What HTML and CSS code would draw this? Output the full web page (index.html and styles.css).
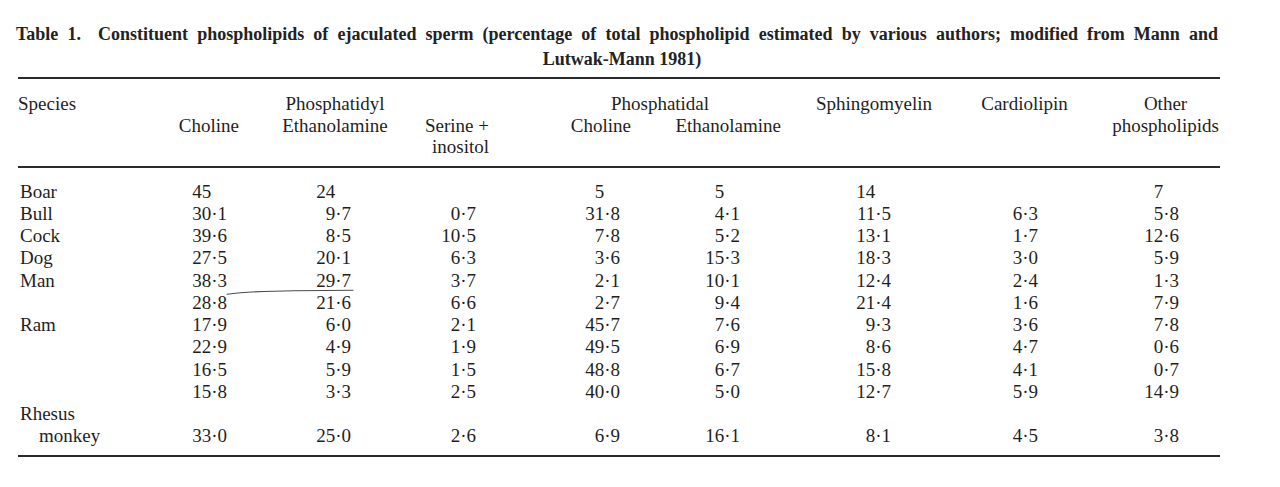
FILE: index.html
```html
<!DOCTYPE html>
<html lang="en">
<head>
<meta charset="utf-8">
<title>Table 1. Constituent phospholipids of ejaculated sperm</title>
<link rel="stylesheet" href="styles.css">
</head>
<body>
<div class="page">
  <div class="caption">
    <p class="cap-line1"><span class="label">Table 1.</span> Constituent phospholipids of ejaculated sperm (percentage of total phospholipid estimated by various authors; modified from Mann and</p>
    <p class="cap-line2">Lutwak-Mann 1981)</p>
  </div>
  <table class="tbl">
    <colgroup>
      <col class="w0"><col class="w1"><col class="w2"><col class="w3"><col class="w4"><col class="w5"><col class="w6"><col class="w7"><col class="w8">
    </colgroup>
    <thead>
      <tr class="h1">
        <th class="h-sp">Species</th>
        <th></th>
        <th class="h-pe">Phosphatidyl</th>
        <th></th>
        <th class="h-pal" colspan="2">Phosphatidal</th>
        <th class="h-sm">Sphingomyelin</th>
        <th class="h-cl">Cardiolipin</th>
        <th class="h-ot">Other</th>
      </tr>
      <tr class="h2">
        <th></th>
        <th class="h-c1">Choline</th>
        <th class="h-pe">Ethanolamine</th>
        <th class="h-si">Serine +<br>inositol</th>
        <th class="h-c4">Choline</th>
        <th class="h-e5">Ethanolamine</th>
        <th></th>
        <th></th>
        <th class="h-ot">phospholipids</th>
      </tr>
    </thead>
    <tbody>
      <tr class="first"><td>Boar</td><td>45<span class="pad">·0</span></td><td>24<span class="pad">·0</span></td><td></td><td>5<span class="pad">·0</span></td><td>5<span class="pad">·0</span></td><td>14<span class="pad">·0</span></td><td></td><td>7<span class="pad">·0</span></td></tr>
      <tr><td>Bull</td><td>30·1</td><td>9·7</td><td>0·7</td><td>31·8</td><td>4·1</td><td>11·5</td><td>6·3</td><td>5·8</td></tr>
      <tr><td>Cock</td><td>39·6</td><td>8·5</td><td>10·5</td><td>7·8</td><td>5·2</td><td>13·1</td><td>1·7</td><td>12·6</td></tr>
      <tr><td>Dog</td><td>27·5</td><td>20·1</td><td>6·3</td><td>3·6</td><td>15·3</td><td>18·3</td><td>3·0</td><td>5·9</td></tr>
      <tr><td>Man</td><td>38·3</td><td>29·7</td><td>3·7</td><td>2·1</td><td>10·1</td><td>12·4</td><td>2·4</td><td>1·3</td></tr>
      <tr><td></td><td>28·8</td><td>21·6</td><td>6·6</td><td>2·7</td><td>9·4</td><td>21·4</td><td>1·6</td><td>7·9</td></tr>
      <tr><td>Ram</td><td>17·9</td><td>6·0</td><td>2·1</td><td>45·7</td><td>7·6</td><td>9·3</td><td>3·6</td><td>7·8</td></tr>
      <tr><td></td><td>22·9</td><td>4·9</td><td>1·9</td><td>49·5</td><td>6·9</td><td>8·6</td><td>4·7</td><td>0·6</td></tr>
      <tr><td></td><td>16·5</td><td>5·9</td><td>1·5</td><td>48·8</td><td>6·7</td><td>15·8</td><td>4·1</td><td>0·7</td></tr>
      <tr><td></td><td>15·8</td><td>3·3</td><td>2·5</td><td>40·0</td><td>5·0</td><td>12·7</td><td>5·9</td><td>14·9</td></tr>
      <tr><td>Rhesus</td><td></td><td></td><td></td><td></td><td></td><td></td><td></td><td></td></tr>
      <tr class="last"><td class="indent">monkey</td><td>33·0</td><td>25·0</td><td>2·6</td><td>6·9</td><td>16·1</td><td>8·1</td><td>4·5</td><td>3·8</td></tr>
    </tbody>
  </table>
  <svg class="pencil" width="132" height="10" viewBox="0 0 132 10" aria-hidden="true">
    <path d="M2 7.2 C 18 5.2, 40 4, 70 3.8 S 115 3.4, 128 3.2" fill="none" stroke="#4a4a4a" stroke-width="1.1" stroke-linecap="round"/>
  </svg>
</div>
</body>
</html>
```

FILE: styles.css
```css
html, body {
  margin: 0;
  padding: 0;
  background: #ffffff;
}

body {
  font-family: "Liberation Serif", "Times New Roman", serif;
  color: #1f1f1f;
}

.page {
  position: relative;
  width: 1280px;
  height: 487px;
  box-sizing: border-box;
  padding: 22px 0 0 16px;
  overflow: hidden;
}

.caption {
  width: 1202px;
  margin: 0 0 5px 0;
  font-weight: bold;
  font-size: 18px;
  line-height: 25px;
  color: #222;
}

.caption p {
  margin: 0;
}

.cap-line1 {
  text-align: justify;
  text-align-last: justify;
}

.cap-line1 .label {
  margin-right: 8px;
}

.cap-line2 {
  text-align: center;
  padding-left: 10px;
}

.tbl {
  margin-left: 2px;
  width: 1202px;
  table-layout: fixed;
  border-collapse: separate;
  border-spacing: 0;
  font-size: 19px;
  color: #1f1f1f;
}

.w0 { width: 142px; }
.w1 { width: 100px; }
.w2 { width: 140px; }
.w3 { width: 130px; }
.w4 { width: 120px; }
.w5 { width: 150px; }
.w6 { width: 160px; }
.w7 { width: 140px; }
.w8 { width: 120px; }

.tbl th {
  font-weight: normal;
  padding: 0;
  line-height: 21.5px;
  vertical-align: top;
  white-space: nowrap;
}

.h1 th {
  border-top: 2px solid #2a2a2a;
  padding-top: 14px;
}

.h2 th {
  border-bottom: 2px solid #2a2a2a;
  padding-bottom: 8px;
}

.h-sp { text-align: left; }
.h-c1 { text-align: right; padding-right: 21px !important; }
.h-pe { text-align: center; padding-left: 10px !important; }
.h-si { text-align: right; padding-right: 41px !important; }
.h-c4 { text-align: right; padding-right: 19px !important; }
.h-e5 { text-align: right; padding-right: 19px !important; }
.h-pal { text-align: center; padding-right: 10px !important; }
.h-sm { text-align: center; padding-right: 12px !important; }
.h-cl { text-align: center; padding-right: 11px !important; }
.h-ot { text-align: center; padding-left: 11px !important; }

.tbl td {
  padding: 0;
  line-height: 22.25px;
  text-align: right;
  white-space: nowrap;
}

.tbl td:first-child {
  text-align: left;
  padding-left: 2px;
}

.tbl td.indent {
  padding-left: 21px;
}

.tbl td:nth-child(2) { padding-right: 33px; }
.tbl td:nth-child(3) { padding-right: 49px; }
.tbl td:nth-child(4) { padding-right: 54px; }
.tbl td:nth-child(5) { padding-right: 30px; }
.tbl td:nth-child(6) { padding-right: 60px; }
.tbl td:nth-child(7) { padding-right: 69px; }
.tbl td:nth-child(8) { padding-right: 62px; }
.tbl td:nth-child(9) { padding-right: 41px; }

.tbl tr.first td {
  padding-top: 13px;
}

.tbl tr.last td {
  padding-bottom: 7px;
  border-bottom: 2px solid #2a2a2a;
}

.pad {
  visibility: hidden;
}

.pencil {
  position: absolute;
  left: 225px;
  top: 287px;
}
```
